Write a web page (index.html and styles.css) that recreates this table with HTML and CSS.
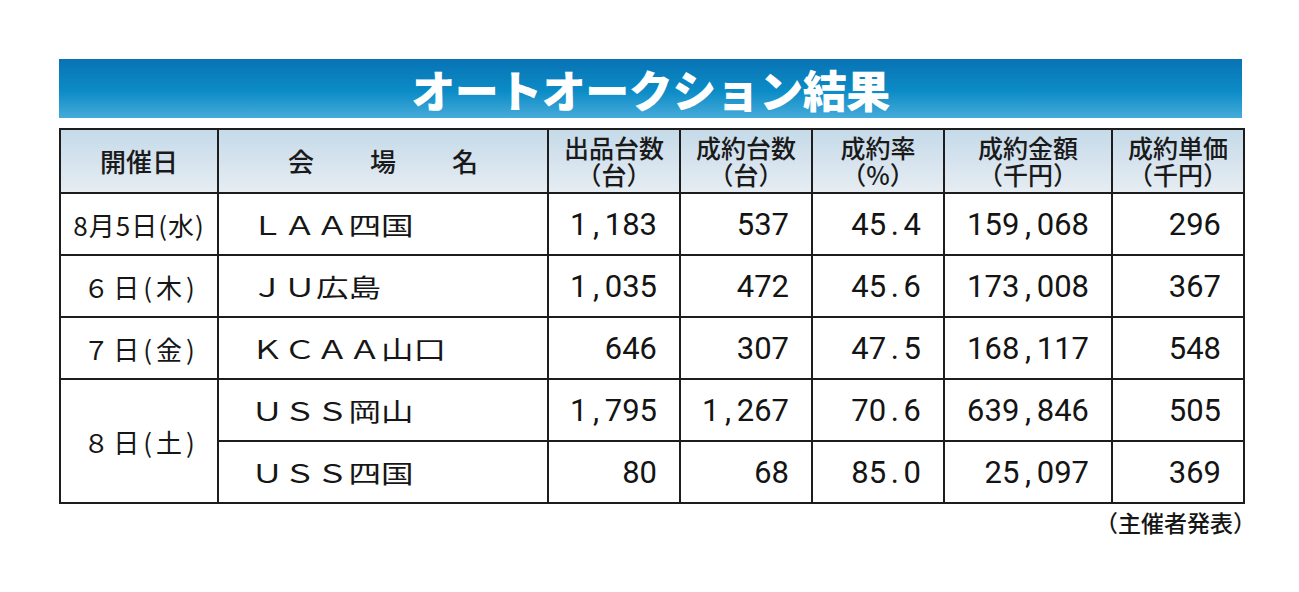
FILE: index.html
```html
<!DOCTYPE html>
<html lang="ja">
<head>
<meta charset="utf-8">
<title>オートオークション結果</title>
<link rel="stylesheet" href="styles.css">
</head>
<body>
<div class="page">
  <h1 class="banner">オートオークション結果</h1>
  <table class="results">
    <colgroup>
      <col class="c-date"><col class="c-venue"><col class="c-num"><col class="c-num"><col class="c-num"><col class="c-amt"><col class="c-num">
    </colgroup>
    <thead>
      <tr>
        <th>開催日</th>
        <th><span class="spread"><span>会</span><span>場</span><span>名</span></span></th>
        <th><span class="hl">出品台数</span><span class="hl">（台）</span></th>
        <th><span class="hl">成約台数</span><span class="hl">（台）</span></th>
        <th><span class="hl">成約率</span><span class="hl">（%）</span></th>
        <th><span class="hl">成約金額</span><span class="hl">（千円）</span></th>
        <th><span class="hl">成約単価</span><span class="hl">（千円）</span></th>
      </tr>
    </thead>
    <tbody>
      <tr>
        <td class="date d1">8月5日(水)</td>
        <td class="venue"><span class="vname">ＬＡＡ四国</span></td>
        <td class="num">1<span class="sep">,</span>183</td>
        <td class="num">537</td>
        <td class="num">45<span class="sep">.</span>4</td>
        <td class="num">159<span class="sep">,</span>068</td>
        <td class="num">296</td>
      </tr>
      <tr>
        <td class="date">６日(木)</td>
        <td class="venue"><span class="vname">ＪＵ広島</span></td>
        <td class="num">1<span class="sep">,</span>035</td>
        <td class="num">472</td>
        <td class="num">45<span class="sep">.</span>6</td>
        <td class="num">173<span class="sep">,</span>008</td>
        <td class="num">367</td>
      </tr>
      <tr>
        <td class="date">７日(金)</td>
        <td class="venue"><span class="vname">ＫＣＡＡ山口</span></td>
        <td class="num">646</td>
        <td class="num">307</td>
        <td class="num">47<span class="sep">.</span>5</td>
        <td class="num">168<span class="sep">,</span>117</td>
        <td class="num">548</td>
      </tr>
      <tr>
        <td class="date" rowspan="2">８日(土)</td>
        <td class="venue"><span class="vname">ＵＳＳ岡山</span></td>
        <td class="num">1<span class="sep">,</span>795</td>
        <td class="num">1<span class="sep">,</span>267</td>
        <td class="num">70<span class="sep">.</span>6</td>
        <td class="num">639<span class="sep">,</span>846</td>
        <td class="num">505</td>
      </tr>
      <tr>
        <td class="venue"><span class="vname">ＵＳＳ四国</span></td>
        <td class="num">80</td>
        <td class="num">68</td>
        <td class="num">85<span class="sep">.</span>0</td>
        <td class="num">25<span class="sep">,</span>097</td>
        <td class="num">369</td>
      </tr>
    </tbody>
  </table>
  <p class="source">（主催者発表）</p>
</div>
</body>
</html>
```

FILE: styles.css
```css
html, body {
  margin: 0;
  padding: 0;
  background: #ffffff;
}

body {
  font-family: "Noto Sans CJK JP", "Noto Sans", sans-serif;
  color: #161616;
}

.page {
  width: 1183px;
  padding: 59px 0 0 59px;
}

.banner {
  margin: 0;
  height: 59px;
  display: flex;
  align-items: center;
  justify-content: center;
  background: linear-gradient(to bottom, #0873b4 0%, #0c8cc6 55%, #46abda 100%);
  color: #ffffff;
  font-family: "Noto Sans CJK JP", sans-serif;
  font-weight: 900;
  font-size: 44px;
  line-height: 1;
  letter-spacing: -0.5px;
}

.results {
  margin-top: 10px;
  width: 1183px;
  border-collapse: collapse;
  table-layout: fixed;
  border: 2px solid #1d1d1d;
}

.c-date { width: 158px; }
.c-venue { width: 330px; }
.c-num { width: 132px; }
.c-amt { width: 168px; }

.results th,
.results td {
  border: 2px solid #1d1d1d;
  padding: 0;
}

.results th {
  height: 62px;
  background: linear-gradient(to bottom, #c5dae9 0%, #d6e3ee 50%, #e6edf2 100%);
  font-weight: 500;
  font-size: 26px;
  line-height: 26px;
  text-align: center;
  vertical-align: middle;
  color: #1a1a1a;
}

.hl {
  display: block;
  font-size: 25px;
  line-height: 27px;
}

.spread {
  display: inline-flex;
  gap: 56px;
}

.results td {
  height: 60px;
  vertical-align: middle;
}

.date {
  text-align: center;
  font-size: 26px;
  letter-spacing: 4px;
  text-indent: 4px;
}

.date.d1 {
  letter-spacing: 1px;
  text-indent: 0;
}

.results td.venue {
  padding-left: 32px;
  font-size: 25px;
}

.vname {
  display: inline-block;
  transform: scaleX(1.3);
  transform-origin: left center;
}

.results td.num {
  text-align: right;
  padding-right: 22px;
  font-family: Roboto, "Liberation Sans", sans-serif;
  font-size: 31px;
  font-variant-numeric: tabular-nums;
  color: #141414;
}

.sep {
  display: inline-block;
  width: 0.56em;
  text-align: center;
}

.source {
  margin: 5px -14px 0 0;
  text-align: right;
  font-size: 23px;
  font-weight: 500;
  line-height: 26px;
}
```
